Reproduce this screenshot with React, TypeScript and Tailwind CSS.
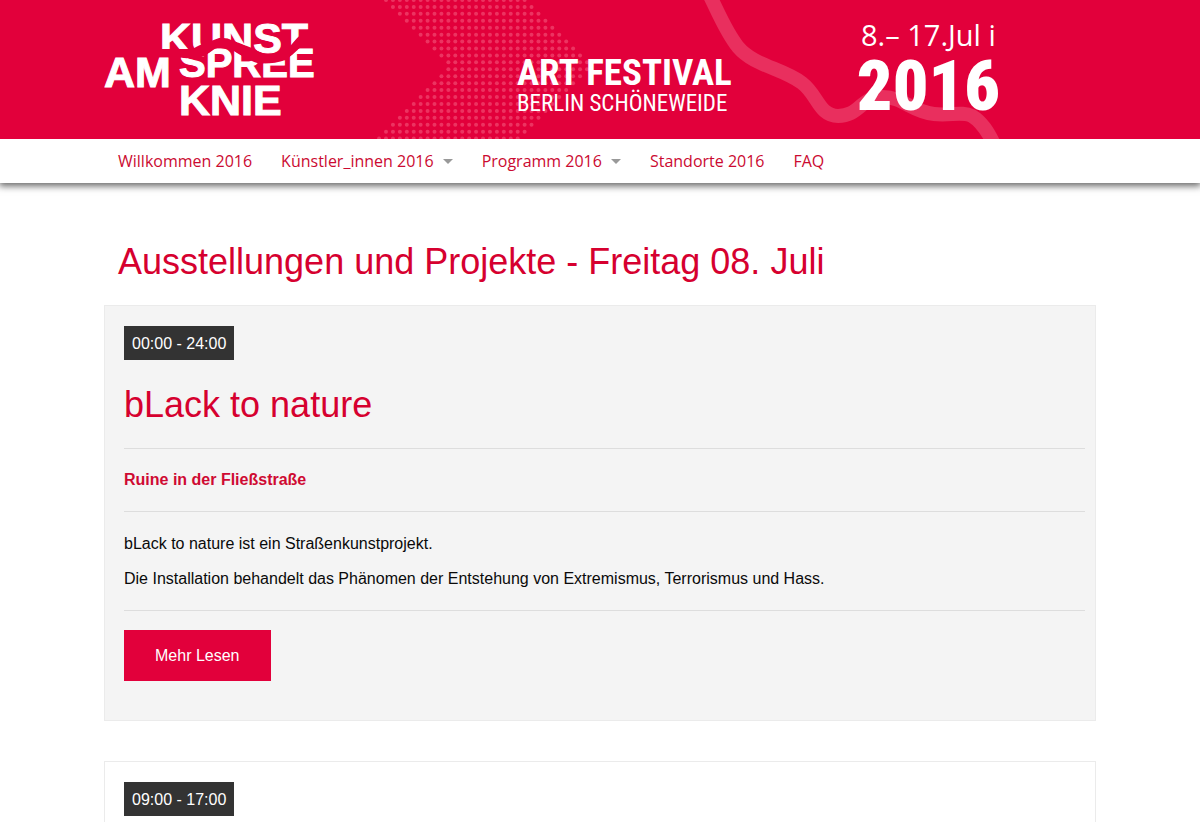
import { Fragment } from 'react';

type NavItem = { label: string; hasMenu?: boolean };

const navItems: NavItem[] = [
  { label: 'Willkommen 2016' },
  { label: 'Künstler_innen 2016', hasMenu: true },
  { label: 'Programm 2016', hasMenu: true },
  { label: 'Standorte 2016' },
  { label: 'FAQ' },
];

type EventItem = {
  time: string;
  title?: string;
  place?: string;
  text?: string[];
  shaded?: boolean;
};

const events: EventItem[] = [
  {
    time: '00:00 - 24:00',
    title: 'bLack to nature',
    place: 'Ruine in der Fließstraße',
    text: [
      'bLack to nature ist ein Straßenkunstprojekt.',
      'Die Installation behandelt das Phänomen der Entstehung von Extremismus, Terrorismus und Hass.',
    ],
    shaded: true,
  },
  { time: '09:00 - 17:00' },
];

// 21 rows of 21 dots, shifted towards the middle row to form an arrow
const dots = Array.from({ length: 21 }, (_, row) => {
  const shift = Math.min(row, 19 - row);
  return Array.from({ length: 21 }, (_, col) => ({
    x: 282 + (col + shift) * 6.93,
    y: row * 6.93,
  }));
}).flat();

function BannerArt() {
  return (
    <svg className="absolute inset-0" width="992" height="139" viewBox="0 0 992 139" aria-hidden="true">
      <g fill="#ec3361">
        {dots.map((dot, i) => (
          <circle key={i} cx={dot.x} cy={dot.y} r="2" />
        ))}
      </g>
      <path
        d="M606 -4C614 12 622 32 634 47C650 66 678 68 698 83C714 95 715 116 734 116C756 116 756 97 779 97C799 97 808 112 830 114C846 116 858 111 868 116C878 122 884 132 890 144"
        fill="none"
        stroke="#e92f5e"
        strokeWidth="14"
      />
    </svg>
  );
}

function Logo() {
  return (
    <svg
      className="block"
      width="212"
      height="139"
      viewBox="0 0 212 139"
      role="img"
      aria-label="Kunst am Spree Knie"
      fill="#fff"
      fontFamily="'Liberation Sans', Arial, sans-serif"
      fontWeight="700"
    >
      <clipPath id="above-river">
        <path d="M50 15H212V28L194 37L187 45Q178 54 168 54Q158 54 148 48L130 41Q122 37 115 38L107 41L98 44L88 49H50Z" />
      </clipPath>
      <clipPath id="below-river">
        <path d="M70 57L90 59Q100 57 105 53Q112 47 118 47Q126 48 133 53Q143 60 153 63Q166 65 182 60L188 55L198 46H212V85H70Z" />
      </clipPath>
      <g stroke="#fff" strokeWidth="1">
        <text x="56" y="53" fontSize="43" clipPath="url(#above-river)">KUNST</text>
        <text x="75" y="77" fontSize="40" clipPath="url(#below-river)">SPREE</text>
        <text x="0" y="87" fontSize="43">AM</text>
        <text x="75" y="115" fontSize="43">KNIE</text>
      </g>
    </svg>
  );
}

function Banner() {
  return (
    <header className="relative z-10 overflow-hidden bg-[#e2003b] text-white">
      <div className="relative mx-auto flex h-[139px] max-w-[992px]">
        <BannerArt />
        <a href="#" className="relative shrink-0">
          <Logo />
        </a>
        <div className="relative ml-[201px] shrink-0 pt-[53px] font-['Roboto_Condensed',sans-serif] whitespace-nowrap">
          <p className="text-[37px] leading-[39px] font-bold">ART FESTIVAL</p>
          <p className="text-[23px] leading-[24px]">BERLIN SCHÖNEWEIDE</p>
        </div>
        <div className="relative ml-auto shrink-0 pt-[16px] pr-[96px] text-center whitespace-nowrap">
          <p className="font-['Open_Sans','Noto_Sans',sans-serif] text-[29px] leading-[38px]">8.– 17.Jul i</p>
          <p className="font-['Roboto_Condensed',sans-serif] text-[70px] leading-[64px] font-black">2016</p>
        </div>
      </div>
    </header>
  );
}

function NavBar() {
  return (
    <nav className="bg-white shadow-[0_2px_7px_1px_rgba(0,0,0,0.6)]">
      <ul className="mx-auto flex h-[44px] max-w-[992px] items-center gap-[29px] px-[14px] font-['Open_Sans','Noto_Sans',sans-serif] text-[16px] text-[#cb0a31]">
        {navItems.map((item) => (
          <li key={item.label}>
            <a href="#" className="flex items-center gap-[9px] whitespace-nowrap">
              {item.label}
              {item.hasMenu && (
                <span className="border-x-[5px] border-t-[5px] border-x-transparent border-t-[#999]" />
              )}
            </a>
          </li>
        ))}
      </ul>
    </nav>
  );
}

function Divider() {
  return <hr className="my-[19px] border-[#ddd]" />;
}

function EventCard({ event }: { event: EventItem }) {
  return (
    <article
      className={`border border-[#ebebeb] pt-5 pr-[10px] pb-[39px] pl-[19px] ${event.shaded ? 'bg-[#f4f4f4]' : 'bg-white'}`}
    >
      <time className="inline-block bg-[#333] px-2 pt-[2px] align-top text-[16px] leading-[32px] text-white">{event.time}</time>
      {event.title && (
        <Fragment>
          <h2 className="mt-5 text-[36px] leading-[49px] text-[#d6002f]">{event.title}</h2>
          <Divider />
          <h3 className="text-[16px] leading-6 font-bold text-[#cf0a32]">{event.place}</h3>
          <Divider />
          <div className="flex flex-col gap-[11px] pt-px text-[16px] leading-6 text-[#0a0a0a]">
            {event.text?.map((line) => (
              <p key={line}>{line}</p>
            ))}
          </div>
          <Divider />
          <button type="button" className="bg-[#e2003b] px-[31px] text-[16px] leading-[51px] text-white">
            Mehr Lesen
          </button>
        </Fragment>
      )}
    </article>
  );
}

export default function App() {
  return (
    <div className="h-screen overflow-hidden bg-white font-['Liberation_Sans',Arial,sans-serif]">
      <Banner />
      <NavBar />
      <main className="mx-auto max-w-[992px]">
        <h1 className="px-[14px] pt-[55px] pb-[19px] text-[36px] leading-[48px] text-[#d6002f]">
          Ausstellungen und Projekte - Freitag 08. Juli
        </h1>
        <div className="flex flex-col gap-10">
          {events.map((event) => (
            <EventCard key={event.time} event={event} />
          ))}
        </div>
      </main>
    </div>
  );
}
